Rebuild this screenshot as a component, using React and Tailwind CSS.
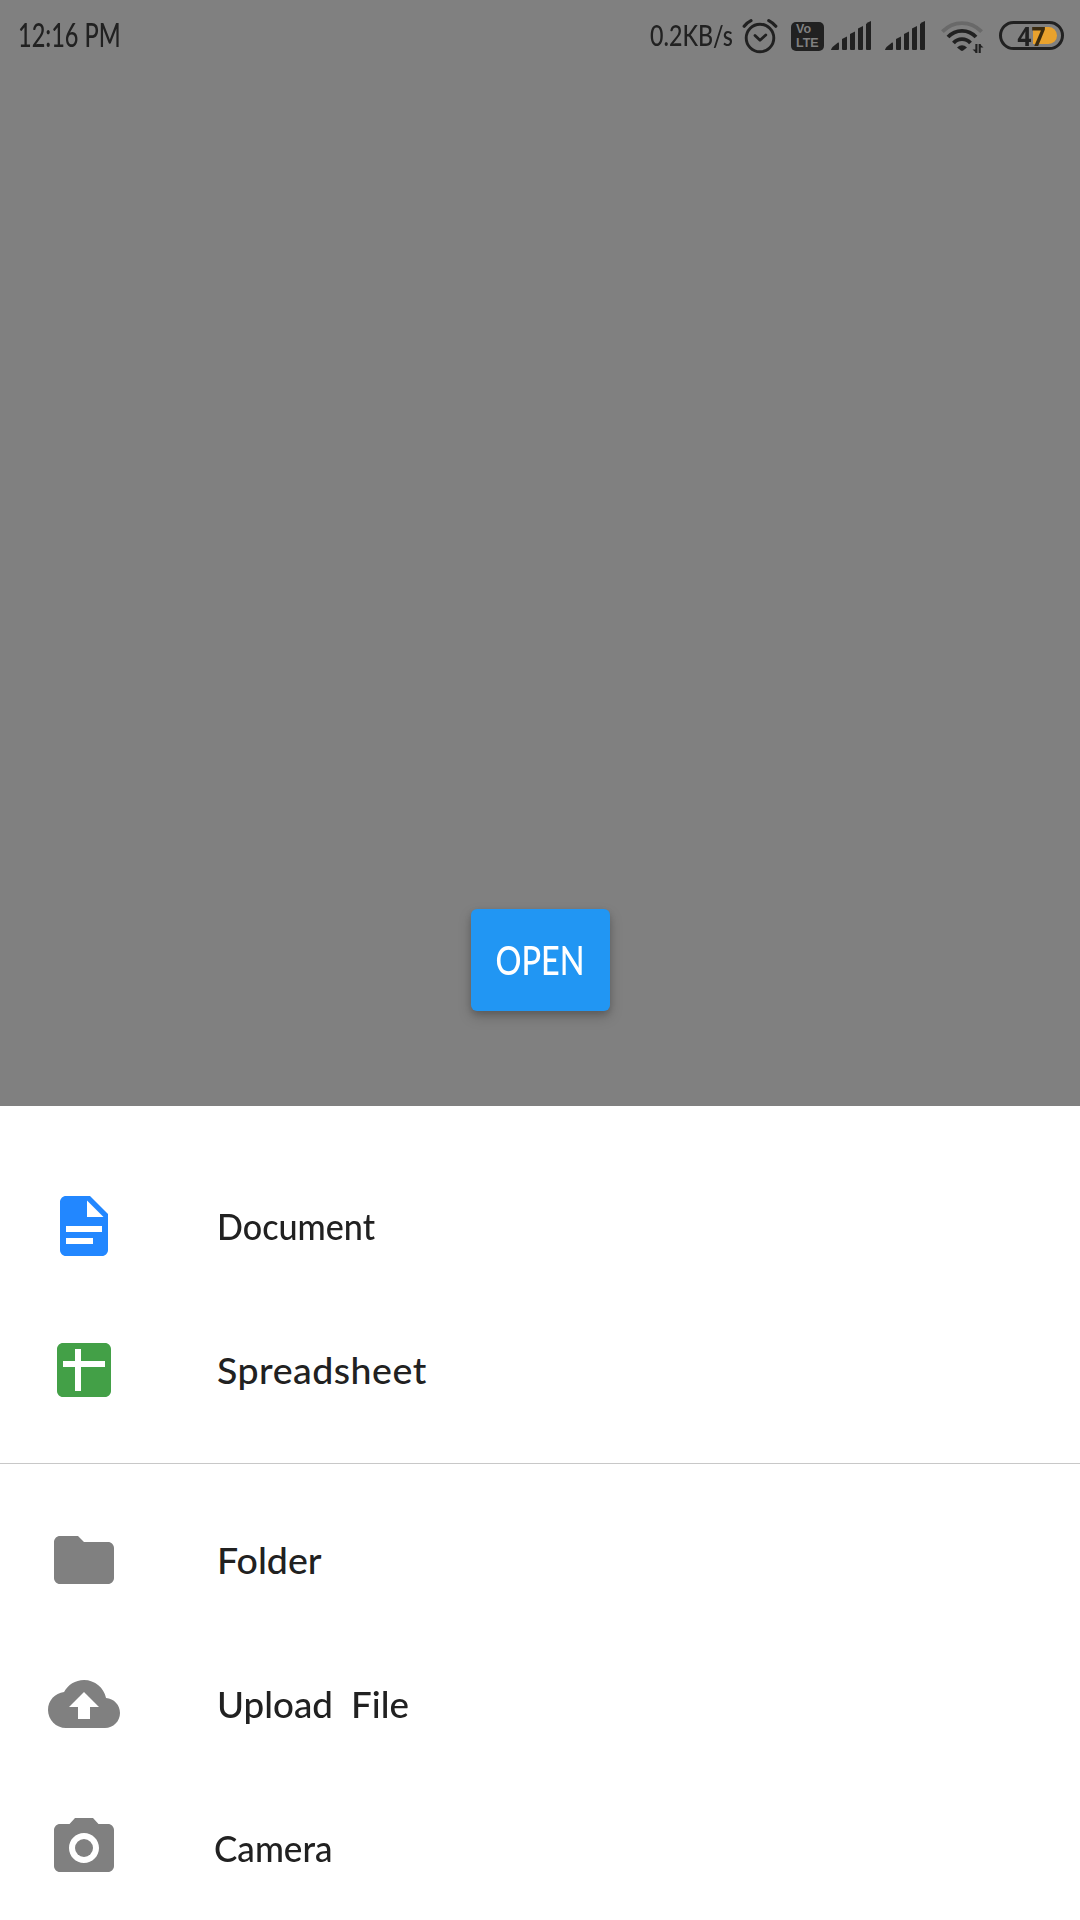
function SignalBars({ className }) {
  return (
    <svg className={className} width="40" height="30" viewBox="0 0 40 30" fill="#212121">
      <path d="M0 28.5L1.5 26L7 21.5Q8 21 8 22.5V28Q8 29 7 29H1Q0 29 0 28.5Z" />
      <path d="M11 18L16 15.5V28Q16 29 15 29H12Q11 29 11 28Z" />
      <path d="M19 13L24 10.5V28Q24 29 23 29H20Q19 29 19 28Z" />
      <path d="M27 7.5L32 5V28Q32 29 31 29H28Q27 29 27 28Z" />
      <path d="M35 3Q37 1 40 0V28Q40 29 39 29H36Q35 29 35 28Z" />
    </svg>
  );
}

function StatusBar() {
  return (
    <div className="flex h-[72px] items-start text-[#212121]">
      <div className="ml-[18px] mt-[16px] w-[120px] whitespace-nowrap text-[32px] font-medium leading-[38px]">
        <span className="inline-block origin-left scale-x-[0.735]">12:16 PM</span>
      </div>
      <div className="ml-auto mt-[17px] w-[88px] whitespace-nowrap text-[28px] font-medium leading-[36px]">
        <span className="inline-block origin-left scale-x-[0.83]">0.2KB/s</span>
      </div>
      <svg className="ml-[4px] mt-[18px]" width="36" height="36" viewBox="0 0 36 36" fill="none" stroke="#212121" strokeLinecap="round">
        <circle cx="18" cy="20" r="13.8" strokeWidth="2.9" />
        <path d="M13 17.5L18 22.3L23.8 17" strokeWidth="2.8" strokeLinejoin="round" />
        <path d="M2.2 8.2Q5 4.5 9 2.6M26.8 2.6Q31 4.8 33.8 8.2" strokeWidth="3.2" />
      </svg>
      <div className="ml-[13px] mt-[22px] flex h-[29px] w-[33px] flex-col rounded-[5px] bg-[#212121] pl-[5px] font-['Liberation_Sans',sans-serif] text-[12.500px] font-bold text-[#808080]">
        <span className="h-[14px] leading-[14px]">Vo</span>
        <span className="h-[14px] leading-[14px]">LTE</span>
      </div>
      <SignalBars className="ml-[7px] mt-[21px]" />
      <SignalBars className="ml-[14px] mt-[21px]" />
      <svg className="ml-[15px] mt-[20px]" width="44" height="36" viewBox="0 0 44 36" fill="none" stroke="#212121" strokeWidth="3.8">
        <path d="M2.4 11.6C13.5 0.2 30.5 0.2 41.6 11.6" stroke="#696969" />
        <path d="M8 17C15.5 8.7 28.5 8.7 36 17" />
        <path d="M13.5 23C18 17.7 26 17.7 30.5 23" />
        <path d="M17 27.5Q22 23 27 27.5L23.2 30.6Q22 31.5 20.8 30.6Z" fill="#212121" stroke="none" />
        <path d="M36.4 24V33M39.7 24V33" strokeWidth="2.1" />
        <path d="M32.5 29.5H36.4V33ZM43.5 27.5H39.7V24Z" fill="#212121" stroke="none" />
      </svg>
      <div className="relative ml-[15px] mr-[16px] mt-[21px] flex h-[29px] w-[65px] items-center justify-center rounded-full border-[3px] border-[#212121] font-['Open_Sans',sans-serif]">
        <div className="absolute right-[4px] top-[3px] h-[17px] w-[24px] rounded-r-full bg-[#e9a22d]" />
        <span className="relative scale-x-[0.92] bg-linear-to-r from-[#212121] from-50% to-[#3a2a0e] to-50% bg-clip-text text-[27px] font-bold leading-[24px] text-transparent">47</span>
      </div>
    </div>
  );
}

function Icon({ color, children }) {
  return (
    <svg width="72" height="72" viewBox="0 0 24 24" fill={color} className="shrink-0">
      {children}
    </svg>
  );
}

function Row({ icon, children, label }) {
  return (
    <div className="flex h-[144px] items-center pl-[48px]">
      {icon}
      <div className={"origin-left whitespace-nowrap text-[37.5px] font-medium leading-[48px] text-[#212121] " + label}>
        {children}
      </div>
    </div>
  );
}

export default function App() {
  return (
    <div className="flex h-[1920px] w-[1080px] flex-col overflow-hidden bg-[#808080] font-['Lato',sans-serif]">
      <StatusBar />
      <div className="flex h-[1034px] flex-col items-center justify-end pb-[95px]">
        <button className="flex h-[102px] w-[139px] items-center justify-center rounded-[6px] bg-[#2196f3] text-white shadow-[0_3px_6px_rgba(0,0,0,0.16),0_6px_14px_rgba(0,0,0,0.18)]">
          <span className="inline-block scale-x-[0.81] text-[40px] font-medium leading-[48px]">OPEN</span>
        </button>
      </div>
      <div className="flex h-[814px] flex-col bg-white pt-[48px]">
        <Row label="ml-[97px] scale-x-[0.91]" icon={
          <Icon color="#2287ff">
            <path fillRule="evenodd" d="M6 2c-1.1 0-2 .9-2 2v16c0 1.1.9 2 2 2h12c1.1 0 2-.9 2-2V8l-6-6H6zm7 7V3.5L18.5 9H13zM6 12h12v2H6zM6 16h9v2H6z" />
          </Icon>
        }>Document</Row>
        <Row label="ml-[97px] tracking-[0.5px]" icon={
          <Icon color="#43a047">
            <path fillRule="evenodd" d="M5 3h14c1.1 0 2 .9 2 2v14c0 1.1-.9 2-2 2H5c-1.1 0-2-.9-2-2V5c0-1.1.9-2 2-2zM9 5v4H5v2h4v8h2v-8h8V9h-8V5z" />
          </Icon>
        }>Spreadsheet</Row>
        <div className="flex h-[46px] flex-col pt-[21px]">
          <div className="h-px bg-[#c8c8c8]" />
        </div>
        <Row label="ml-[97px]" icon={
          <Icon color="#808080">
            <path d="M10 4H4c-1.1 0-2 .9-2 2v12c0 1.1.9 2 2 2h16c1.1 0 2-.9 2-2V8c0-1.1-.9-2-2-2h-8l-2-2z" />
          </Icon>
        }>Folder</Row>
        <Row label="ml-[97px] scale-x-[0.98] [word-spacing:9px]" icon={
          <Icon color="#808080">
            <path d="M19.35 10.04C18.67 6.59 15.64 4 12 4 9.11 4 6.6 5.64 5.35 8.04 2.34 8.36 0 10.91 0 14c0 3.31 2.69 6 6 6h13c2.76 0 5-2.24 5-5 0-2.64-2.05-4.78-4.65-4.96zM14 13v4h-4v-4H7l5-5 5 5h-3z" />
          </Icon>
        }>Upload File</Row>
        <Row label="ml-[94px] scale-x-[0.935]" icon={
          <Icon color="#808080">
            <circle cx="12" cy="12" r="3" />
            <path d="M9 2L7.17 4H4c-1.1 0-2 .9-2 2v12c0 1.1.9 2 2 2h16c1.1 0 2-.9 2-2V6c0-1.1-.9-2-2-2h-3.17L15 2H9zm3 15c-2.76 0-5-2.24-5-5s2.24-5 5-5 5 2.24 5 5-2.24 5-5 5z" />
          </Icon>
        }>Camera</Row>
      </div>
    </div>
  );
}
